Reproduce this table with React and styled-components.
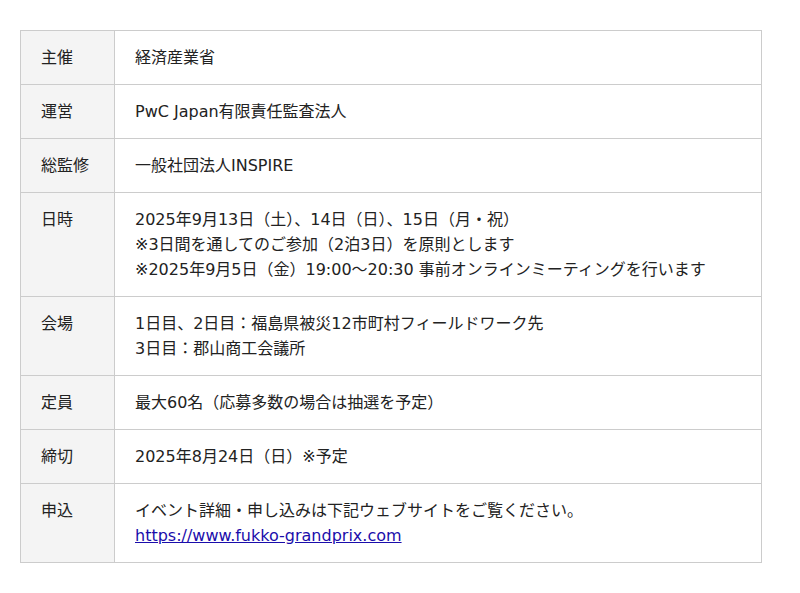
import React from 'react';
import styled, { createGlobalStyle } from 'styled-components';

const GlobalStyle = createGlobalStyle`
  body {
    margin: 0;
    background: #ffffff;
    font-family: "DejaVu Sans", "Noto Sans CJK JP", sans-serif;
    color: #222222;
  }
`;

// 表の内容
const rows = [
  { label: '主催', lines: ['経済産業省'] },
  { label: '運営', lines: ['PwC Japan有限責任監査法人'] },
  { label: '総監修', lines: ['一般社団法人INSPIRE'] },
  {
    label: '日時',
    lines: [
      '2025年9月13日（土）、14日（日）、15日（月・祝）',
      '※3日間を通してのご参加（2泊3日）を原則とします',
      '※2025年9月5日（金）19:00〜20:30 事前オンラインミーティングを行います',
    ],
  },
  {
    label: '会場',
    lines: ['1日目、2日目：福島県被災12市町村フィールドワーク先', '3日目：郡山商工会議所'],
  },
  { label: '定員', lines: ['最大60名（応募多数の場合は抽選を予定）'] },
  { label: '締切', lines: ['2025年8月24日（日）※予定'] },
];

const App = () => (
  <>
    <GlobalStyle />
    <Page>
      <Table>
        <tbody>
          {rows.map(row => (
            <tr key={row.label}>
              <HeadCell>{row.label}</HeadCell>
              <BodyCell>
                {row.lines.map(line => (
                  <Line key={line}>{line}</Line>
                ))}
              </BodyCell>
            </tr>
          ))}
          <tr>
            <HeadCell>申込</HeadCell>
            <BodyCell>
              <Line>イベント詳細・申し込みは下記ウェブサイトをご覧ください。</Line>
              <Line>
                <Link href="https://www.fukko-grandprix.com">https://www.fukko-grandprix.com</Link>
              </Line>
            </BodyCell>
          </tr>
        </tbody>
      </Table>
    </Page>
  </>
);

export default App;

// Styled Components
const Page = styled.div`
  padding: 30px 38px 30px 20px;
`;

const Table = styled.table`
  width: 742px;
  border-collapse: collapse;
  border: 1px solid #dddddd;
  font-family: "DejaVu Sans", "Noto Sans CJK JP", sans-serif;
  font-size: 16px;
  line-height: 25px;
  color: #222222;
`;

const HeadCell = styled.th`
  width: 53px;
  padding: 14px 20px;
  background-color: #f4f4f4;
  border: 1px solid #cccccc;
  font-weight: normal;
  text-align: left;
  vertical-align: top;
  white-space: nowrap;
`;

const BodyCell = styled.td`
  padding: 14px 20px;
  border: 1px solid #cccccc;
  vertical-align: top;
`;

const Line = styled.div``;

const Link = styled.a`
  color: #1a0dab;
  text-decoration: underline;
`;
